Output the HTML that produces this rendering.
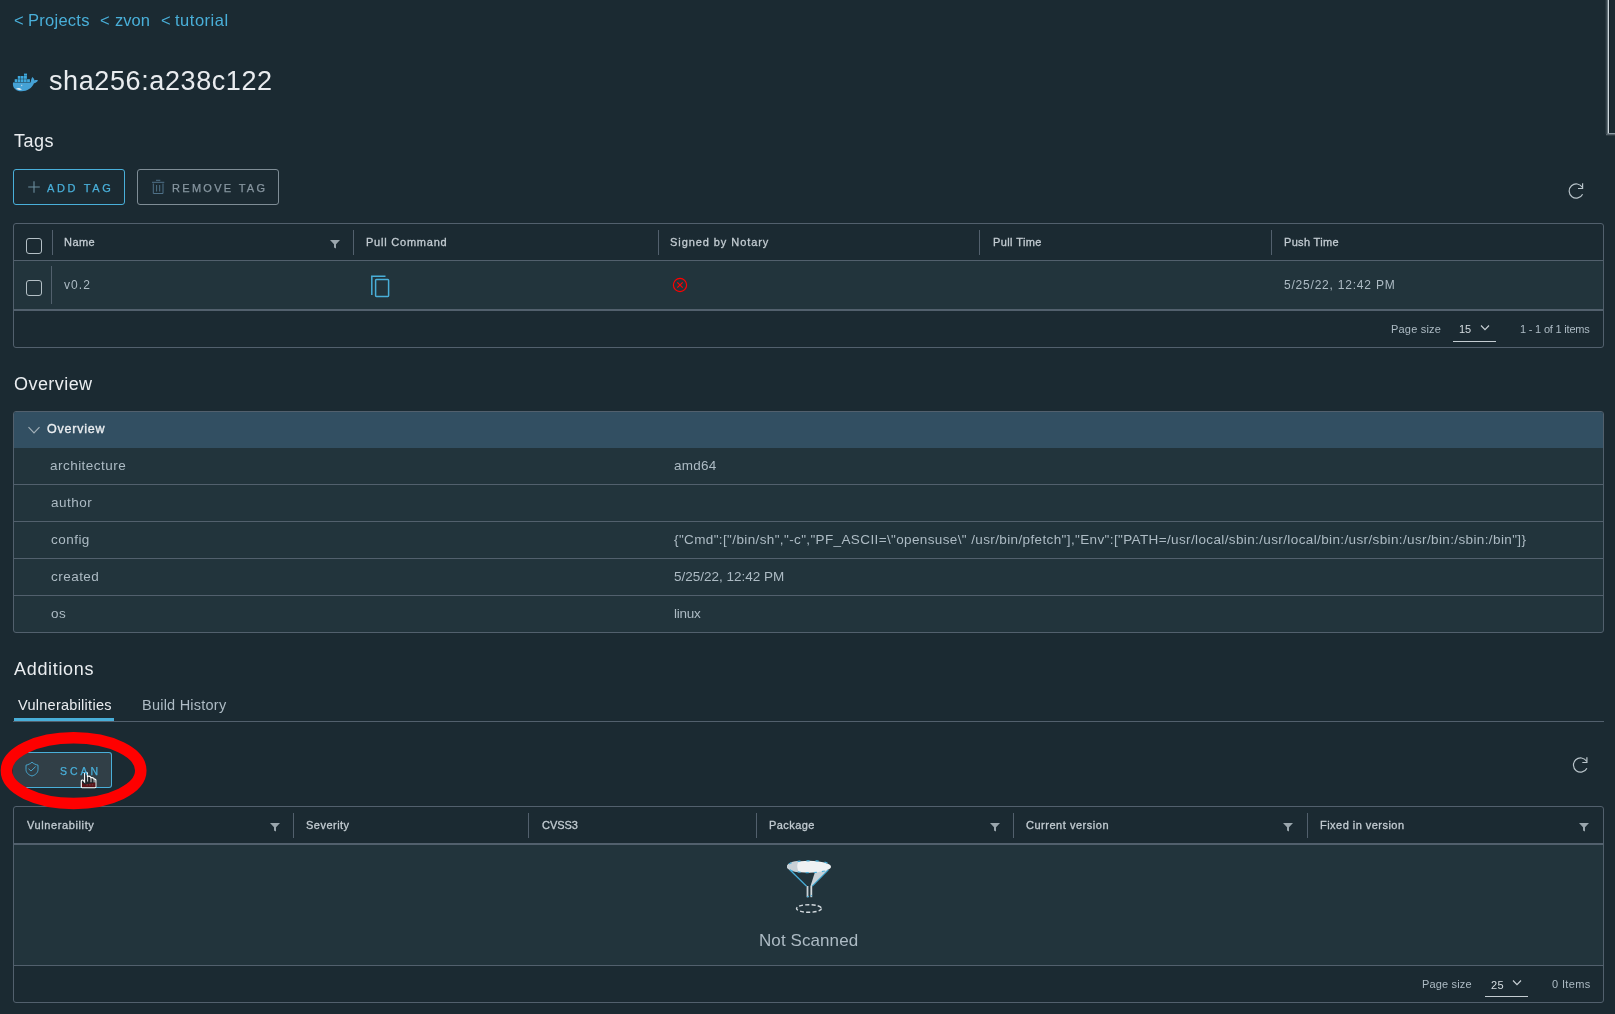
<!DOCTYPE html>
<html><head><meta charset="utf-8"><style>
html,body{margin:0;padding:0;}
body{width:1615px;height:1014px;background:#1b2a32;overflow:hidden;position:relative;font-family:"Liberation Sans", sans-serif;}
.t{position:absolute;white-space:pre;line-height:1;will-change:transform;}
.a{position:absolute;box-sizing:border-box;}
svg{position:absolute;overflow:visible;}
</style></head><body>
<!-- scrollbar -->
<div class="a" style="left:1605px;top:0;width:1px;height:134px;background:#27353d"></div>
<div class="a" style="left:1606px;top:0;width:1px;height:134px;background:#3a4850"></div>
<div class="a" style="left:1607px;top:0;width:1px;height:134px;background:#66747c"></div>
<div class="a" style="left:1608px;top:0;width:1px;height:133px;background:#cdd6dc"></div>
<div class="a" style="left:1609px;top:0;width:1px;height:133px;background:#16222a"></div>
<div class="a" style="left:1608px;top:133px;width:7px;height:1px;background:#8d9aa2"></div>
<div class="a" style="left:1606px;top:134px;width:9px;height:1px;background:#56636b"></div>
<div class="a" style="left:1606px;top:135px;width:9px;height:1px;background:#2e3b43"></div>
<!-- whale -->
<svg style="left:10px;top:70px" width="30" height="24" viewBox="10 70 30 24">
<path d="M13,82.4 L30.6,82.4 C31,80 31.6,78.2 32.3,77 C33.4,77.8 34.3,79.2 34.5,80.4 C35.8,79.9 37,80.1 38,80.5 C37.2,82 35.6,83 34,83.3 C32,88.2 27.2,91.3 21.6,91.3 C16.4,91.3 13,88.4 12.9,84.2 Z" fill="#45a2d6"/>
<g fill="#3ea8dd">
<rect x="14.7" y="79.2" width="2.7" height="2.9"/><rect x="17.8" y="79.2" width="2.7" height="2.9"/><rect x="20.9" y="79.2" width="2.7" height="2.9"/><rect x="24" y="79.2" width="2.7" height="2.9"/><rect x="27.1" y="79.2" width="2.8" height="2.9"/>
<rect x="17.8" y="76" width="2.7" height="2.8"/><rect x="20.9" y="76" width="2.7" height="2.8"/><rect x="24" y="76" width="2.9" height="2.8"/>
<rect x="24" y="73.6" width="3" height="2.1"/>
</g>
<path d="M16,88.6 C18,87.6 20.5,88 22,89.6 C19.5,90.3 17.5,90 16,88.6 Z" fill="#e6eef2"/>
<rect x="21.3" y="84.8" width="0.9" height="1.3" fill="#dfe8ee"/>
</svg>

<!-- ADD TAG button -->
<div class="a" style="left:13px;top:169px;width:112px;height:36px;border:1px solid #49afd9;border-radius:3px"></div>
<svg style="left:26px;top:179px" width="16" height="16" viewBox="26 179 16 16">
<path d="M28.2,187 H39.8 M34,181.2 V192.8" stroke="#6b8d9e" stroke-width="1.1" fill="none"/>
</svg>
<!-- REMOVE TAG -->
<div class="a" style="left:137px;top:169px;width:142px;height:36px;border:1px solid #7f8d96;border-radius:3px"></div>
<svg style="left:150px;top:178px" width="16" height="18" viewBox="150 178 16 18">
<g stroke="#4f7188" stroke-width="1" fill="none">
<path d="M152,182.3 H164.3"/><path d="M156,180.3 H160.3"/>
<path d="M153.3,183.5 V193.5 H163 V183.5"/>
<path d="M156.6,185 V191.5 M159.7,185 V191.5"/>
</g></svg>

<!-- refresh 1 -->
<svg style="left:1565px;top:180px" width="22" height="22" viewBox="1565 180 22 22">
<g stroke="#b9c4ca" stroke-width="1.2" fill="none">
<path d="M1582.6,194.2 A7.1,7.1 0 1 1 1582.3,187.3"/>
<path d="M1578,188.5 H1582.6 V183.2"/>
</g></svg>

<!-- TABLE 1 -->
<div class="a" style="left:13px;top:223px;width:1591px;height:125px;border:1px solid #52606d;border-radius:3px"></div>
<div class="a" style="left:14px;top:260px;width:1589px;height:1px;background:#52606d"></div>
<div class="a" style="left:14px;top:261px;width:1589px;height:48px;background:#22343c"></div>
<div class="a" style="left:14px;top:309px;width:1589px;height:2px;background:#52606d"></div>
<div class="a" style="left:52px;top:230px;width:1px;height:25px;background:#52606d"></div>
<div class="a" style="left:353px;top:230px;width:1px;height:25px;background:#52606d"></div>
<div class="a" style="left:658px;top:230px;width:1px;height:25px;background:#52606d"></div>
<div class="a" style="left:979px;top:230px;width:1px;height:25px;background:#52606d"></div>
<div class="a" style="left:1271px;top:230px;width:1px;height:25px;background:#52606d"></div>
<div class="a" style="left:51px;top:266px;width:1px;height:38px;background:#52606d"></div>
<div class="a" style="left:26px;top:238px;width:16px;height:16px;border:1px solid #b4c0c6;border-radius:3px"></div>
<div class="a" style="left:26px;top:280px;width:16px;height:16px;border:1px solid #b4c0c6;border-radius:3px"></div>
<svg style="left:328px;top:238px" width="14" height="12" viewBox="328 238 14 12">
<path d="M330,240 H340 L336,244.2 V248.6 L334,247.4 V244.2 Z" fill="#9aa6ad"/></svg>
<svg style="left:369px;top:273px" width="22" height="26" viewBox="369 273 22 26">
<g stroke="#49afd9" stroke-width="1.5" fill="none">
<path d="M371.8,295 V276.2 H385.5"/>
<rect x="375.6" y="279.6" width="13" height="16.8" rx="0.8"/>
</g></svg>
<svg style="left:670px;top:275px" width="20" height="20" viewBox="670 275 20 20">
<g stroke="#ff0000" stroke-width="1.2" fill="none">
<circle cx="680" cy="285" r="6.6"/>
<path d="M677.3,282.3 L682.7,287.7 M682.7,282.3 L677.3,287.7"/>
</g></svg>
<div class="a" style="left:1453px;top:341px;width:43px;height:1px;background:#c4cdd2"></div>
<svg style="left:1478px;top:322px" width="14" height="11" viewBox="1478 322 14 11">
<path d="M1481,325.5 L1485,329.6 L1489,325.5" stroke="#c8d0d5" stroke-width="1.2" fill="none"/></svg>

<!-- STACK VIEW -->
<div class="a" style="left:13px;top:411px;width:1591px;height:222px;border:1px solid #52606d;border-radius:3px;background:#22343c"></div>
<div class="a" style="left:14px;top:412px;width:1589px;height:36px;background:#324f62;border-radius:2px 2px 0 0"></div>
<div class="a" style="left:14px;top:484px;width:1589px;height:1px;background:#52606d"></div>
<div class="a" style="left:14px;top:521px;width:1589px;height:1px;background:#52606d"></div>
<div class="a" style="left:14px;top:558px;width:1589px;height:1px;background:#52606d"></div>
<div class="a" style="left:14px;top:595px;width:1589px;height:1px;background:#52606d"></div>
<svg style="left:26px;top:424px" width="16" height="12" viewBox="26 424 16 12">
<path d="M28.5,427.2 L34,432.8 L39.5,427.2" stroke="#a3b0b8" stroke-width="1.2" fill="none"/></svg>

<!-- TABS -->
<div class="a" style="left:13px;top:721px;width:1591px;height:1px;background:#52606d"></div>
<div class="a" style="left:14px;top:718px;width:100px;height:3px;background:#49afd9"></div>

<!-- SCAN button -->
<div class="a" style="left:13px;top:752px;width:99px;height:36px;border:1px solid #49afd9;border-left-color:transparent;border-radius:3px;background:#313f47"></div>
<svg style="left:23px;top:759px" width="18" height="20" viewBox="23 759 18 20">
<g stroke="#49afd9" stroke-width="0.9" fill="none">
<path d="M26,765.2 C28.5,764.6 30.5,763.6 32,762.2 C33.5,763.6 35.5,764.6 38,765.2 V769.6 C38,772.6 35.6,775 32,776 C28.4,775 26,772.6 26,769.6 Z"/>
<path d="M28.5,768.8 L31,771 L35.6,766.6"/>
</g></svg>
<!-- refresh 2 -->
<svg style="left:1569px;top:754px" width="22" height="22" viewBox="1569 754 22 22">
<g stroke="#b9c4ca" stroke-width="1.2" fill="none">
<path d="M1586.9,768.2 A7.1,7.1 0 1 1 1586.6,761.3"/>
<path d="M1582.3,762.5 H1586.9 V757.2"/>
</g></svg>

<!-- TABLE 2 -->
<div class="a" style="left:13px;top:806px;width:1591px;height:197px;border:1px solid #52606d;border-radius:3px"></div>
<div class="a" style="left:14px;top:843px;width:1589px;height:2px;background:#52606d"></div>
<div class="a" style="left:14px;top:845px;width:1589px;height:120px;background:#22343c"></div>
<div class="a" style="left:14px;top:965px;width:1589px;height:1px;background:#52606d"></div>
<div class="a" style="left:293px;top:813px;width:1px;height:25px;background:#52606d"></div>
<div class="a" style="left:528px;top:813px;width:1px;height:25px;background:#52606d"></div>
<div class="a" style="left:756px;top:813px;width:1px;height:25px;background:#52606d"></div>
<div class="a" style="left:1013px;top:813px;width:1px;height:25px;background:#52606d"></div>
<div class="a" style="left:1307px;top:813px;width:1px;height:25px;background:#52606d"></div>
<svg style="left:0;top:0" width="1615" height="1014" viewBox="0 0 1615 1014">
<g fill="#9aa6ad">
<path d="M270,823 H280 L276,827.2 V831.6 L274,830.4 V827.2 Z"/>
<path d="M990,823 H1000 L996,827.2 V831.6 L994,830.4 V827.2 Z"/>
<path d="M1283,823 H1293 L1289,827.2 V831.6 L1287,830.4 V827.2 Z"/>
<path d="M1579,823 H1589 L1585,827.2 V831.6 L1583,830.4 V827.2 Z"/>
</g>
<!-- funnel -->
<path d="M789.5,869.6 L806.8,886 L806.8,897.5 L812,897.5 L812,886 L828.5,869.6 Z" fill="none"/>
<path d="M815,872 L810.5,886 L812,886 L828.5,869.6 Z" fill="#c9d2d8"/>
<path d="M806.6,886 V897.2 H808.4 V886 Z" fill="#c9d1d6"/>
<path d="M810.4,886 V897.2 H812.2 V886 Z" fill="#d3dade"/>
<ellipse cx="809" cy="866.7" rx="22" ry="6" fill="#eef1f3"/>
<path d="M787,866.7 C787,863 793,861 800,860.8 C796,863 797,869 799,872.3 C792,871.5 787,869.5 787,866.7 Z" fill="#c8d1d7"/>
<g stroke="#49afd9" stroke-width="1.2" fill="none">
<path d="M789.8,869.8 L806.6,886.2"/>
<path d="M828.3,869.8 L812.2,886.2"/>
<path d="M807,897 L812,895.5" stroke-dasharray="2 2"/>
<path d="M789,864 C793,861.5 800,860.8 809,860.8 C818,860.8 825,861.5 829,864" stroke-dasharray="3 6"/>
<path d="M790,870 C795,872 802,872.6 809,872.6 C816,872.6 823,872 828,870" stroke-dasharray="3 5"/>
</g>
<ellipse cx="809" cy="908.5" rx="12.5" ry="3.8" fill="none" stroke="#d2d9de" stroke-width="1.4" stroke-dasharray="4 2.2"/>
<!-- red ellipse -->
<ellipse cx="73.6" cy="770.6" rx="67.2" ry="32.8" fill="none" stroke="#ff0000" stroke-width="11.5"/>
</svg>
<div class="a" style="left:1485px;top:996px;width:43px;height:1px;background:#c4cdd2"></div>
<svg style="left:1510px;top:977px" width="14" height="11" viewBox="1510 977 14 11">
<path d="M1513,980.5 L1517,984.6 L1521,980.5" stroke="#c8d0d5" stroke-width="1.2" fill="none"/></svg>

<svg style="left:78px;top:769px" width="22" height="22" viewBox="78 769 22 22">
<path d="M84.6,772.8 Q86,771.6 87.4,772.8 L87.4,776.4 Q89.2,775.6 90.6,776.8 L90.8,777.8 Q92.6,777.2 93.8,778.4 L94,779.2 Q95.6,778.8 95.9,780 L95.9,786.8 Q95.9,787.7 95,787.7 L82.1,787.7 Q81.3,787.7 81.3,786.8 L81.3,781 Q81.6,779.8 82.8,780 L84.6,782 Z" fill="#1f262b" stroke="#ffffff" stroke-width="1.1"/>
<path d="M82,782.6 L84.8,784.6 L95.3,782.6 V787.1 H82 Z" fill="#5a1217"/>
<path d="M87.6,777 V781.6 M91,778.2 V782.2 M94.1,779.3 V782.4" stroke="#e8e8e8" stroke-width="0.9"/>
<path d="M86.4,784.9 H93.4" stroke="#7a4a50" stroke-width="0.9" stroke-dasharray="1.5 1.2"/>
</svg>

<span class="t" style="left:13.7px;top:12.03px;font-size:16.5px;font-weight:normal;color:#49afd9;letter-spacing:0px;">&lt;</span>
<span class="t" style="left:27.6px;top:12.03px;font-size:16.5px;font-weight:normal;color:#49afd9;letter-spacing:0.264px;">Projects</span>
<span class="t" style="left:99.7px;top:12.03px;font-size:16.5px;font-weight:normal;color:#49afd9;letter-spacing:0px;">&lt;</span>
<span class="t" style="left:114.6px;top:12.03px;font-size:16.5px;font-weight:normal;color:#49afd9;letter-spacing:0.041px;">zvon</span>
<span class="t" style="left:161px;top:12.03px;font-size:16.5px;font-weight:normal;color:#49afd9;letter-spacing:0px;">&lt;</span>
<span class="t" style="left:175.4px;top:12.03px;font-size:16.5px;font-weight:normal;color:#49afd9;letter-spacing:0.52px;">tutorial</span>
<span class="t" style="left:48.9px;top:68.14px;font-size:27px;font-weight:normal;color:#e9ecef;letter-spacing:0.602px;">sha256:a238c122</span>
<span class="t" style="left:13.9px;top:131.76px;font-size:18px;font-weight:normal;color:#eaedf0;letter-spacing:0.526px;">Tags</span>
<span class="t" style="left:47.1px;top:182.69px;font-size:11px;font-weight:normal;color:#49afd9;letter-spacing:2.663px;-webkit-text-stroke:0.25px #49afd9">ADD TAG</span>
<span class="t" style="left:171.6px;top:182.69px;font-size:11px;font-weight:normal;color:#8796a0;letter-spacing:2.303px;-webkit-text-stroke:0.25px #8796a0">REMOVE TAG</span>
<span class="t" style="left:64.4px;top:236.69px;font-size:11px;font-weight:normal;color:#c3ccd2;letter-spacing:0.458px;-webkit-text-stroke:0.3px #c3ccd2">Name</span>
<span class="t" style="left:366.4px;top:236.69px;font-size:11px;font-weight:normal;color:#c3ccd2;letter-spacing:0.78px;-webkit-text-stroke:0.3px #c3ccd2">Pull Command</span>
<span class="t" style="left:670px;top:236.69px;font-size:11px;font-weight:normal;color:#c3ccd2;letter-spacing:0.928px;-webkit-text-stroke:0.3px #c3ccd2">Signed by Notary</span>
<span class="t" style="left:992.5px;top:236.69px;font-size:11px;font-weight:normal;color:#c3ccd2;letter-spacing:0.398px;-webkit-text-stroke:0.3px #c3ccd2">Pull Time</span>
<span class="t" style="left:1284.3px;top:236.69px;font-size:11px;font-weight:normal;color:#c3ccd2;letter-spacing:0.332px;-webkit-text-stroke:0.3px #c3ccd2">Push Time</span>
<span class="t" style="left:64.4px;top:278.84px;font-size:12px;font-weight:normal;color:#adbbc4;letter-spacing:1.064px;">v0.2</span>
<span class="t" style="left:1284.3px;top:278.84px;font-size:12px;font-weight:normal;color:#adbbc4;letter-spacing:0.789px;">5/25/22, 12:42 PM</span>
<span class="t" style="left:1390.8px;top:323.69px;font-size:11px;font-weight:normal;color:#adbbc4;letter-spacing:0.201px;">Page size</span>
<span class="t" style="left:1459.3px;top:324.49px;font-size:11px;font-weight:normal;color:#d5dce0;letter-spacing:0px;">15</span>
<span class="t" style="left:1520.3px;top:323.69px;font-size:11px;font-weight:normal;color:#adbbc4;letter-spacing:-0.197px;">1 - 1 of 1 items</span>
<span class="t" style="left:13.5px;top:374.76px;font-size:18px;font-weight:normal;color:#eaedf0;letter-spacing:0.441px;">Overview</span>
<span class="t" style="left:47px;top:423.42px;font-size:12.5px;font-weight:normal;color:#eaedf0;letter-spacing:0.791px;-webkit-text-stroke:0.35px #eaedf0">Overview</span>
<span class="t" style="left:50.3px;top:458.57px;font-size:13.5px;font-weight:normal;color:#adbbc4;letter-spacing:0.471px;">architecture</span>
<span class="t" style="left:50.5px;top:495.57px;font-size:13.5px;font-weight:normal;color:#adbbc4;letter-spacing:0.47px;">author</span>
<span class="t" style="left:50.5px;top:532.57px;font-size:13.5px;font-weight:normal;color:#adbbc4;letter-spacing:0.47px;">config</span>
<span class="t" style="left:50.5px;top:569.57px;font-size:13.5px;font-weight:normal;color:#adbbc4;letter-spacing:0.47px;">created</span>
<span class="t" style="left:50.5px;top:606.57px;font-size:13.5px;font-weight:normal;color:#adbbc4;letter-spacing:0.47px;">os</span>
<span class="t" style="left:673.9px;top:458.57px;font-size:13.5px;font-weight:normal;color:#adbbc4;letter-spacing:0.258px;">amd64</span>
<span class="t" style="left:673.9px;top:532.57px;font-size:13.5px;font-weight:normal;color:#adbbc4;letter-spacing:0.376px;">{"Cmd":["/bin/sh","-c","PF_ASCII=\"opensuse\" /usr/bin/pfetch"],"Env":["PATH=/usr/local/sbin:/usr/local/bin:/usr/sbin:/usr/bin:/sbin:/bin"]}</span>
<span class="t" style="left:673.9px;top:569.57px;font-size:13.5px;font-weight:normal;color:#adbbc4;letter-spacing:0.001px;">5/25/22, 12:42 PM</span>
<span class="t" style="left:673.9px;top:606.57px;font-size:13.5px;font-weight:normal;color:#adbbc4;letter-spacing:-0.229px;">linux</span>
<span class="t" style="left:13.9px;top:659.76px;font-size:18px;font-weight:normal;color:#eaedf0;letter-spacing:0.682px;">Additions</span>
<span class="t" style="left:17.6px;top:697.93px;font-size:14.5px;font-weight:normal;color:#eaedf0;letter-spacing:0.266px;">Vulnerabilities</span>
<span class="t" style="left:142.2px;top:697.93px;font-size:14.5px;font-weight:normal;color:#adbbc4;letter-spacing:0.23px;">Build History</span>
<span class="t" style="left:60px;top:766.31px;font-size:10.5px;font-weight:normal;color:#49afd9;letter-spacing:3.003px;-webkit-text-stroke:0.25px #49afd9">SCAN</span>
<span class="t" style="left:26.5px;top:819.69px;font-size:11px;font-weight:normal;color:#c3ccd2;letter-spacing:0.607px;-webkit-text-stroke:0.3px #c3ccd2">Vulnerability</span>
<span class="t" style="left:305.8px;top:819.69px;font-size:11px;font-weight:normal;color:#c3ccd2;letter-spacing:0.481px;-webkit-text-stroke:0.3px #c3ccd2">Severity</span>
<span class="t" style="left:541.6px;top:819.69px;font-size:11px;font-weight:normal;color:#c3ccd2;letter-spacing:-0.064px;-webkit-text-stroke:0.3px #c3ccd2">CVSS3</span>
<span class="t" style="left:769px;top:819.69px;font-size:11px;font-weight:normal;color:#c3ccd2;letter-spacing:0.418px;-webkit-text-stroke:0.3px #c3ccd2">Package</span>
<span class="t" style="left:1026px;top:819.69px;font-size:11px;font-weight:normal;color:#c3ccd2;letter-spacing:0.523px;-webkit-text-stroke:0.3px #c3ccd2">Current version</span>
<span class="t" style="left:1320.2px;top:819.69px;font-size:11px;font-weight:normal;color:#c3ccd2;letter-spacing:0.466px;-webkit-text-stroke:0.3px #c3ccd2">Fixed in version</span>
<span class="t" style="left:758.7px;top:931.61px;font-size:17px;font-weight:normal;color:#adbbc4;letter-spacing:0.087px;">Not Scanned</span>
<span class="t" style="left:1422.4px;top:978.89px;font-size:11px;font-weight:normal;color:#adbbc4;letter-spacing:0.164px;">Page size</span>
<span class="t" style="left:1490.7px;top:979.69px;font-size:11px;font-weight:normal;color:#d5dce0;letter-spacing:0.282px;">25</span>
<span class="t" style="left:1551.8px;top:978.89px;font-size:11px;font-weight:normal;color:#adbbc4;letter-spacing:0.372px;">0 Items</span>
</body></html>
